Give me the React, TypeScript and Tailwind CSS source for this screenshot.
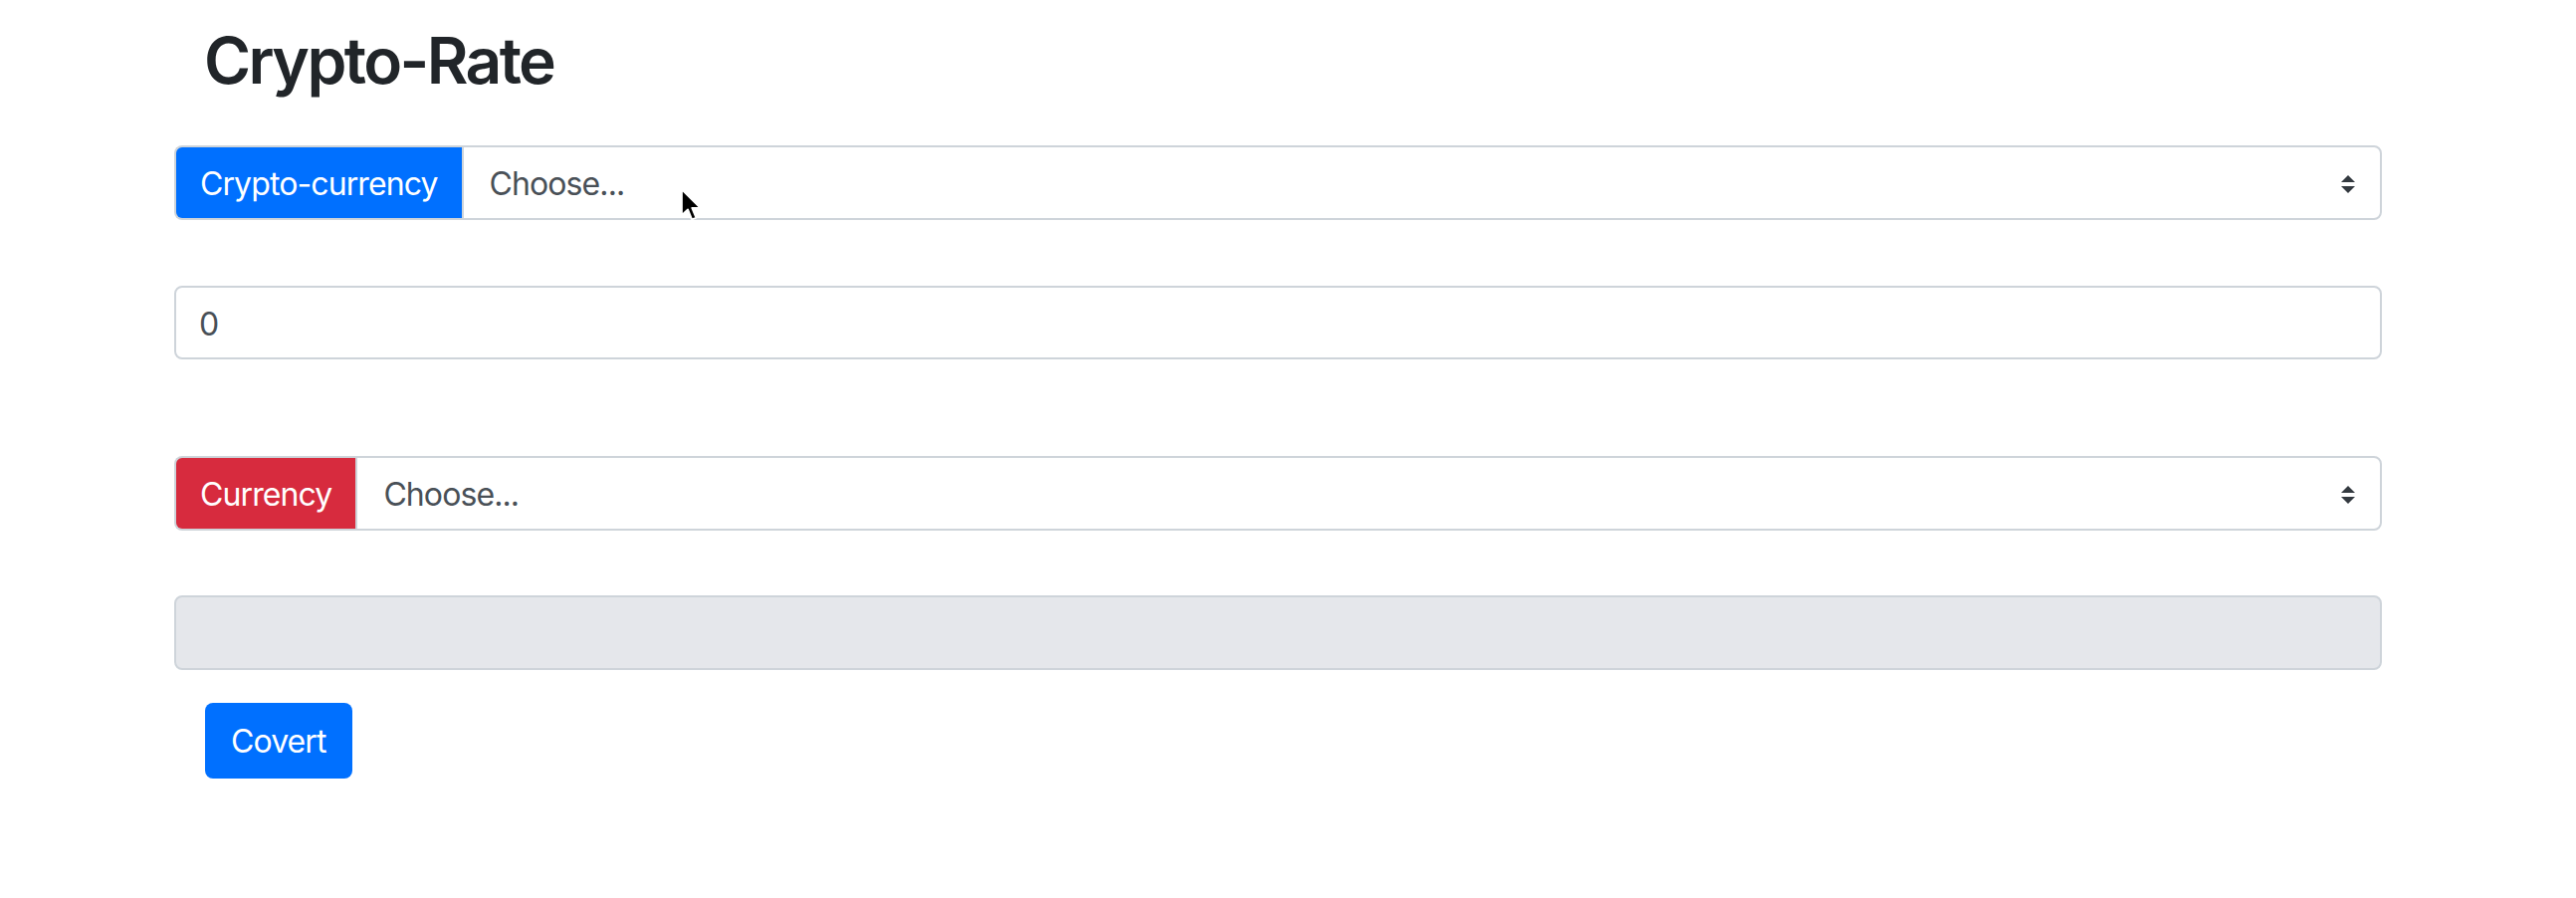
import React from "react";

const Arrows = () => (
  <svg width="16" height="18" viewBox="0 0 16 18" className="shrink-0">
    <path d="M8 0 L15 7 L1 7 Z" fill="#343a40" />
    <path d="M1 11 L15 11 L8 18 Z" fill="#343a40" />
  </svg>
);

const Cursor = () => (
  <svg
    width="24"
    height="34"
    viewBox="0 0 13 18"
    className="absolute left-[684px] top-[189px]"
  >
    <path
      d="M0.5 0.5 L0.5 14.5 L3.8 11.4 L6 16.8 L8.3 15.9 L6.1 10.6 L10.6 10.6 Z"
      fill="#000"
      stroke="#fff"
      strokeWidth="1"
      strokeLinejoin="round"
    />
  </svg>
);

export default function App() {
  return (
    <div
      className="relative w-[2588px] h-[902px] bg-white overflow-hidden"
      style={{ fontFamily: "Inter, 'Liberation Sans', sans-serif" }}
    >
      <div className="pl-[175px] w-[2393px]">
        <h2 className="pt-[23px] pl-[30px] text-[64px] leading-[1.2] font-semibold tracking-[-2.6px] text-[#212529]">
          Crypto-Rate
        </h2>

        <div className="mt-[46px] flex h-[75px] text-[32px] tracking-[-0.9px]">
          <div className="flex items-center pt-[4px] px-[24px] bg-[#0070ff] text-white rounded-l-[8px] border-2 border-r-0 border-[#ced4da] whitespace-nowrap">
            Crypto-currency
          </div>
          <div className="flex-1 flex items-center justify-between pt-[4px] pl-[26px] pr-[24px] border-2 border-[#ced4da] rounded-r-[8px] text-[#495057]">
            <span>Choose...</span>
            <Arrows />
          </div>
        </div>

        <div className="mt-[66px] flex items-center pt-[4px] h-[74px] px-[23px] border-2 border-[#ced4da] rounded-[8px] text-[32px] text-[#495057]">
          0
        </div>

        <div className="mt-[97px] flex h-[75px] text-[32px] tracking-[-0.9px]">
          <div className="flex items-center pt-[4px] px-[24px] bg-[#d72b3e] text-white rounded-l-[8px] border-2 border-r-0 border-[#ced4da] whitespace-nowrap">
            Currency
          </div>
          <div className="flex-1 flex items-center justify-between pt-[4px] pl-[26px] pr-[24px] border-2 border-[#ced4da] rounded-r-[8px] text-[#495057]">
            <span>Choose...</span>
            <Arrows />
          </div>
        </div>

        <div className="mt-[65px] h-[75px] bg-[#e5e7eb] border-2 border-[#ced4da] rounded-[8px]" />

        <button className="mt-[33px] ml-[31px] h-[76px] pt-[3px] px-[26px] flex items-center justify-center bg-[#0070ff] text-white text-[32px] tracking-[-0.9px] rounded-[8px]">
          Covert
        </button>
      </div>
      <Cursor />
    </div>
  );
}
